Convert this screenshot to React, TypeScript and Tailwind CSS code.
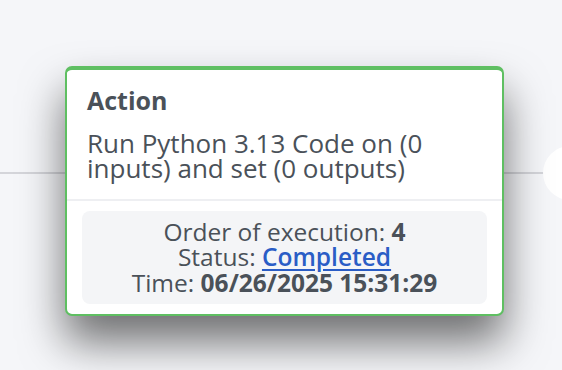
import React from "react";

export default function App() {
  return (
    <div
      className="relative w-[562px] h-[370px] overflow-hidden bg-[#f5f6f9]"
      style={{ fontFamily: '"Open Sans", "Liberation Sans", sans-serif' }}
    >
      {/* connector line on canvas */}
      <div className="absolute left-0 top-[172px] w-[562px] h-[2px] bg-[#d4d5da]" />
      {/* next node (off-screen circle) */}
      <div className="absolute left-[543px] top-[146px] w-[54px] h-[54px] rounded-full bg-white" />

      {/* card node */}
      <div className="absolute left-[65px] top-[66px] w-[439px] rounded-[7px] border-2 border-t-4 border-[#5fbf62] bg-white shadow-[0_26px_44px_0_rgba(0,0,0,0.55)] text-[#4a5159]">
        <div className="px-[20px] pt-[18px] pb-[18px]">
          <div className="text-[25px] leading-[25.5px] font-bold">Action</div>
          <div className="mt-[17px] text-[26px] leading-[25px]">
            Run Python 3.13 Code on (0 inputs) and set (0 outputs)
          </div>
        </div>
        <div className="border-t-2 border-[#eeeff2] px-[15px] pt-[10px] pb-[10px]">
          <div className="rounded-[8px] bg-[#f4f5f7] pt-[8px] pb-[9px] text-center text-[24.5px] leading-[25.5px]">
            <div>
              Order of execution: <span className="font-bold">4</span>
            </div>
            <div>
              Status:{" "}
              <a className="font-semibold text-[#2a5dc6] underline underline-offset-[3px]" href="#">
                Completed
              </a>
            </div>
            <div>
              Time: <span className="font-bold">06/26/2025 15:31:29</span>
            </div>
          </div>
        </div>
      </div>
    </div>
  );
}
